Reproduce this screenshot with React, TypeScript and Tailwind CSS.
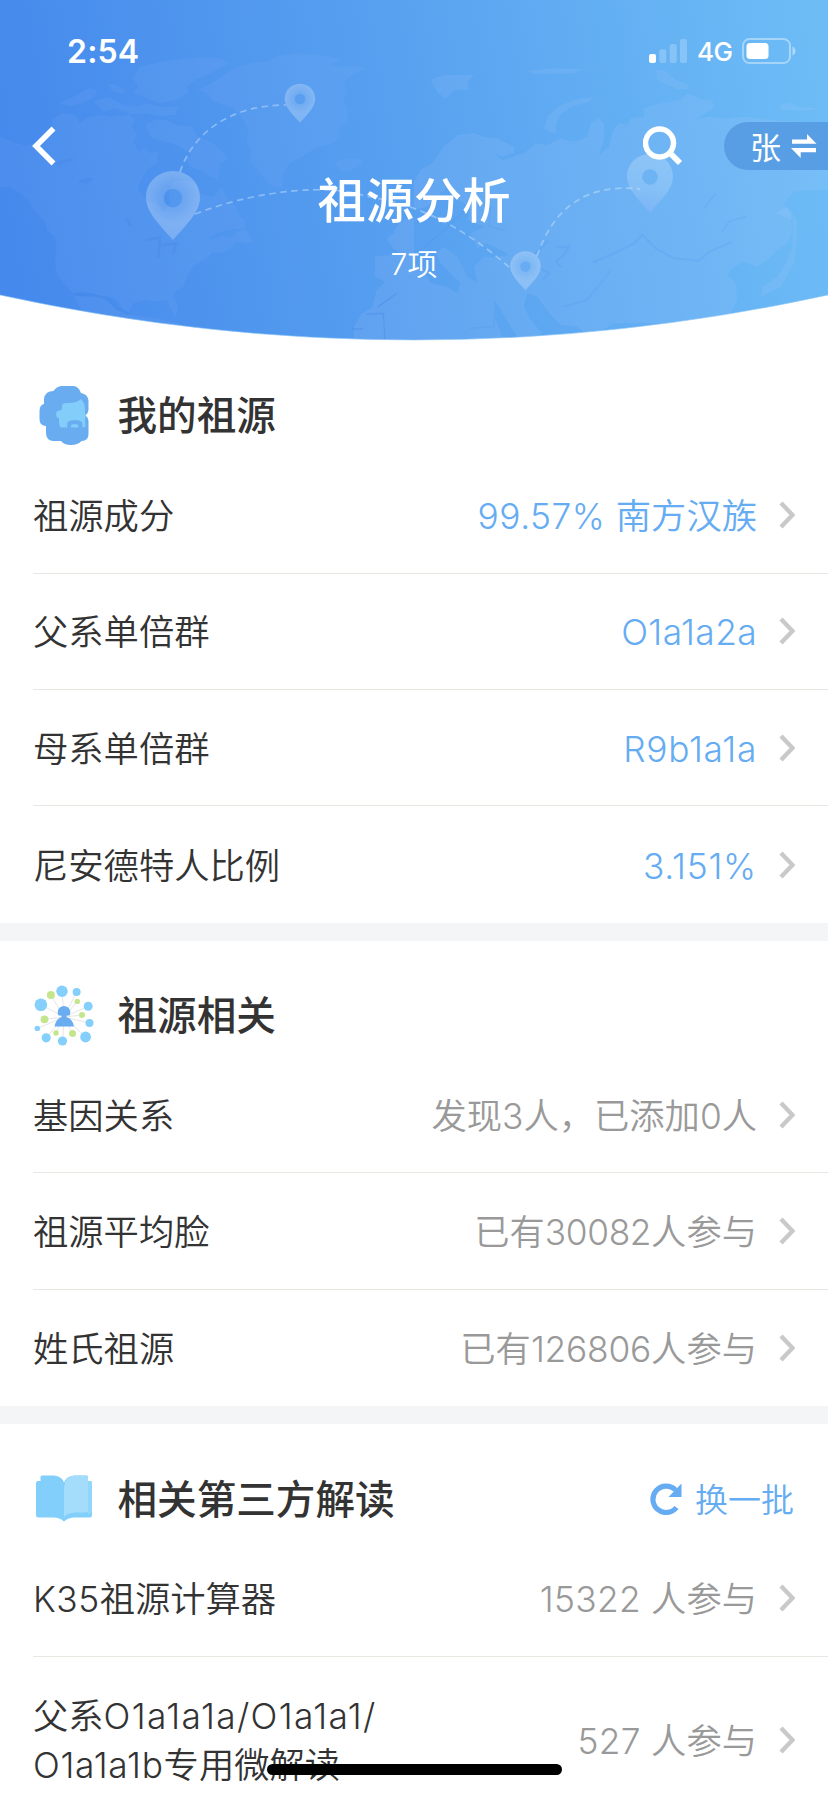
import type { ReactNode } from "react";

type Item = { label: ReactNode; value: ReactNode };

const ancestry: Item[] = [
  { label: "祖源成分", value: <><span className="tracking-[0.500px]">99.57% </span>南方汉族</> },
  { label: "父系单倍群", value: <span className="tracking-[0.400px]">O1a1a2a</span> },
  { label: "母系单倍群", value: <span className="tracking-[0.700px]">R9b1a1a</span> },
  { label: "尼安德特人比例", value: <span className="tracking-[0.800px]">3.151%</span> },
];

const related: Item[] = [
  { label: "基因关系", value: "发现3人，已添加0人" },
  { label: "祖源平均脸", value: <>已有<span className="tracking-[-0.400px]">30082</span>人参与</> },
  { label: "姓氏祖源", value: <>已有<span className="tracking-[-0.200px]">126806</span>人参与</> },
];

const thirdParty: Item[] = [
  { label: <><span className="tracking-[0.500px]">K35</span>祖源计算器</>, value: <><span className="tracking-[0.300px]">15322 </span>人参与</> },
  {
    label: (
      <>
        父系<span className="tracking-[1.350px]">O1a1a1a/O1a1a1/</span>
        <br />
        <span className="tracking-[0.700px]">O1a1a1b</span>专用微解读
      </>
    ),
    value: <><span className="tracking-[0.300px]">527 </span>人参与</>,
  },
];

function Pin({ x, y, r, id }: { x: number; y: number; r: number; id: string }) {
  return (
    <g transform={`translate(${x} ${y}) scale(${r / 27})`}>
      <path
        fillRule="evenodd"
        fill={`url(#${id})`}
        d="M0-27C15-27 27-15.500 27-.5C27 14 14 26 0 42C-14 26-27 14-27-.5C-27-15.500-15-27 0-27ZM0-9.200A9.200 9.200 0 1 0 0 9.200A9.200 9.200 0 1 0 0-9.200Z"
      />
    </g>
  );
}

function WorldMap() {
  return (
    <svg viewBox="0 0 828 341" className="absolute inset-0 h-[341px] w-[828px]" aria-hidden="true">
      <defs>
        <linearGradient id="sky" gradientUnits="userSpaceOnUse" x1="0" y1="180" x2="815" y2="40">
          <stop offset="0" stopColor="#4589ec" />
          <stop offset="0.5" stopColor="#58a1f0" />
          <stop offset="1" stopColor="#6dbcf6" />
        </linearGradient>
        <radialGradient id="pin" gradientUnits="userSpaceOnUse" cx="0" cy="0" r="42">
          <stop offset="0.2" stopColor="#fff" stopOpacity="0.13" />
          <stop offset="0.6" stopColor="#fff" stopOpacity="0.25" />
          <stop offset="1" stopColor="#fff" stopOpacity="0.22" />
        </radialGradient>
        <linearGradient id="pinFade" x1="0" y1="0" x2="0" y2="1">
          <stop offset="0" stopColor="#fff" stopOpacity="0.22" />
          <stop offset="0.6" stopColor="#fff" stopOpacity="0.16" />
          <stop offset="1" stopColor="#c8b8ff" stopOpacity="0.16" />
        </linearGradient>
        <clipPath id="dome">
          <path d="M0 0H828V295Q621 340 414 340Q207 340 0 295Z" />
        </clipPath>
      </defs>
      <g clipPath="url(#dome)">
        <rect width="828" height="341" fill="url(#sky)" />
        <g transform="scale(.33333)" fill="#b4c4ff" fillOpacity="0.075">
          <path d="M0 410L40 425L75 438L120 425L160 400L155 360L185 340L225 345L240 370L265 350L300 345L330 350L390 345L405 360L395 380L410 400L400 425L415 455L435 440L450 460L475 455L470 490L440 510L420 545L415 570L440 600L470 610L490 640L510 610L505 575L520 545L560 540L590 555L600 580L640 590L665 560L680 595L705 615L720 650L735 660L735 685L690 690L650 700L625 720L655 710L670 705L690 715L720 690L740 690L762 725L735 730L710 725L690 745L665 760L640 755L625 770L600 785L580 800L560 830L550 860L520 880L535 930L525 950L510 920L500 900L470 905L440 900L400 910L385 940L370 930L350 900L330 890L290 885L250 875L220 880L190 850L170 820L165 790L170 740L165 710L140 690L135 665L105 635L85 600L60 580L25 560L0 562Z" />
          <path d="M220 885L260 890L310 890L330 910L350 930L385 945L440 950L540 970L560 1000L400 990L250 940L235 915Z" />
          <path d="M175 310L220 290L265 265L290 270L285 290L250 310L210 320Z" />
          <path d="M280 305L320 290L345 300L370 315L410 320L440 310L480 320L535 320L525 345L480 348L440 340L390 342L345 325L310 335Z" />
          <path d="M320 250L350 255L375 270L370 282L335 272Z" />
          <path d="M398 235L420 200L480 185L540 178L600 172L660 175L692 190L660 205L620 225L585 240L560 260L570 275L530 300L480 310L430 290L400 280L415 260Z" />
          <path d="M435 375L465 360L500 360L530 375L575 380L595 410L640 430L685 475L660 490L655 540L630 530L600 510L570 500L560 475L575 465L540 440L500 425L455 415Z" />
          <path d="M595 270L650 240L700 205L760 188L800 185L840 165L900 160L960 165L1020 178L990 195L1030 200L1075 198L1100 207L1060 220L1030 245L1040 270L1030 300L1045 330L1040 365L1015 385L1020 410L1000 430L945 445L905 470L870 490L850 520L845 565L820 560L790 535L770 505L750 490L752 450L740 430L745 390L730 360L700 325L640 305L620 280Z" />
          <path d="M1005 485L1040 475L1080 475L1087 490L1060 508L1030 515L1010 500Z" />
        </g>
        <g transform="scale(.33333)" fill="#d0d4ff" fillOpacity="0.1">
          <path d="M1180 700L1200 665L1230 650L1242 655V760L1210 765L1180 745L1160 715Z" />
          <path d="M1125 768L1242 760V1050H1060L1062 980L1085 940L1115 925L1130 870L1155 845L1125 830Z" />
        </g>
        <g transform="translate(414) scale(.33333)" fill="#d0d4ff" fillOpacity="0.1">
          <path d="M50 240L90 225L180 225L160 245L165 270L120 270L95 297L70 275Z" />
          <path d="M340 212L420 205L505 208L480 220L360 222Z" />
          <path d="M725 210L750 210L785 240L825 255L820 268L790 268L730 240Z" />
          <path d="M390 385L400 350L440 315L500 295L538 293L525 305L470 320L440 345L425 375L428 400L405 395Z" />
          <path d="M1098 315L1130 308L1150 320L1210 325L1180 332L1100 330Z" />
          <path d="M0 545L20 510L55 490L90 440L130 405L180 398L205 410L250 415L300 440L300 460L265 470L240 460L265 480L330 460L365 430L400 435L440 415L480 425L520 410L530 370L555 355L570 370L570 420L555 465L585 440L595 395L615 370L640 375L650 355L690 350L690 325L740 310L800 300L820 280L860 297L895 300L900 325L840 360L880 350L930 355L1000 350L1060 360L1242 370V570L1180 570L1140 575L1110 610L1130 640L1135 690L1120 730L1090 750L1060 780L1030 800L985 785L955 805L940 825L965 850L970 900L950 940L920 970H600L530 1010L490 980L440 975L405 940L370 890L340 880L330 920L350 960L385 1000L350 1015L310 1010L290 980L260 930L240 900L245 960L265 1010L250 1030H0V790L30 810L50 850L100 860L130 880L140 850L80 790L65 760L90 740L130 770L160 830L190 850L180 800L210 770L250 770L285 765L250 745L215 730L190 745L170 700L210 680L160 660L170 620L130 600L100 560L70 590L40 620L0 630Z" />
          <path d="M1085 640L1120 620L1150 660L1150 720L1140 790L1100 860L1040 890L1045 860L1090 830L1120 780L1135 740L1135 660Z" />
        </g>
        <g transform="translate(414) scale(.33333)" fill="none" stroke="#3e91ec" strokeOpacity="0.16" strokeWidth="6" strokeLinecap="round">
          <path d="M430 742L465 740L450 765L425 785L440 800M365 760L400 725M380 805L405 820L390 835" />
          <path d="M540 785L590 765L660 730L685 705L725 745L780 775L855 782L885 755L950 728" />
          <path d="M925 695L945 665L995 650M870 625L905 580M165 985L240 980L240 930M170 600L165 620L80 700L30 740M230 620L225 680L270 690M450 920L520 900L560 850L590 810" strokeWidth="4" />
        </g>
        <g transform="scale(.33333)" fill="none" stroke="#3e7de4" strokeOpacity="0.2" strokeWidth="8" strokeLinecap="round">
          <path d="M240 545L275 535L255 550M175 490L215 478M380 655L390 675M440 720L480 712L475 770M490 735L530 730L520 760" />
          <path d="M225 885L280 883L325 900L350 925L385 940" strokeWidth="6" />
          <path d="M1060 987H1088M1100 942L1150 940L1155 1020M1135 920L1190 880" strokeOpacity=".3" strokeWidth="4" />
        </g>
        <g fill="none" stroke="#d8edff" strokeOpacity="0.42" strokeWidth="1.700" strokeDasharray="6.500 4.500">
          <path d="M180 172C193 133 230 105 286 105" />
          <path d="M195 214C260 189 330 184 365 196C425 205 470 233 509 267" />
          <path d="M537 256C553 209 585 183 640 189" />
        </g>
        <Pin x={173} y={198} r={27} id="pin" />
        <Pin x={300} y={99} r={15.300} id="pin" />
        <Pin x={525.500} y={266.500} r={15.300} id="pin" />
        <Pin x={650} y={177} r={23} id="pinFade" />
      </g>
      <path d="M0 295Q207 340 414 340Q621 340 828 295" fill="none" stroke="#8cc5f7" strokeOpacity=".6" strokeWidth="1" />
    </svg>
  );
}

function StatusBar() {
  return (
    <div className="flex h-[102px] items-center justify-between pr-[32px] pl-[67px]">
      <span className="pt-[1px] text-[32px] leading-none font-semibold tracking-[0.200px]">2:54</span>
      <div className="flex items-center">
        <svg width="38" height="24" viewBox="0 0 38 24" fill="#fff" aria-hidden="true">
          <rect x="0" y="15" width="7" height="9" rx="2" />
          <g fillOpacity=".22">
            <rect x="10.300" y="10.300" width="7" height="13.700" rx="2" />
            <rect x="20.700" y="5" width="7" height="19" rx="2" />
            <rect x="31" y="0" width="7" height="24" rx="2" />
          </g>
        </svg>
        <span className="ml-[10px] w-[36px] pt-[2px] text-[26px] leading-none font-medium tracking-[-0.500px]">4G</span>
        <svg className="ml-[9px]" width="54" height="26" viewBox="0 0 54 26" aria-hidden="true">
          <rect x="1" y="1" width="47" height="24" rx="6.500" fill="none" stroke="#fff" strokeOpacity=".4" strokeWidth="2" />
          <rect x="4.500" y="5" width="22" height="16" rx="3.500" fill="#fff" />
          <path d="M50.500 8.500C54.500 10.300 54.500 15.700 50.500 17.500Z" fill="#fff" fillOpacity=".45" />
        </svg>
      </div>
    </div>
  );
}

function Header() {
  return (
    <header className="relative h-[341px] shrink-0 text-white">
      <WorldMap />
      <div className="relative">
        <StatusBar />
        <div className="flex h-[88px] items-start pt-[20px] pl-[32px]">
          <svg className="mt-[4px]" width="24" height="40" viewBox="0 0 24 40" fill="none" stroke="#fff" strokeWidth="5.500" aria-hidden="true">
            <path d="M21.500 2.500L4 20L21.500 37.500" />
          </svg>
          <svg className="mt-[4px] ml-[587px]" width="40" height="40" viewBox="0 0 40 40" fill="none" stroke="#fff" aria-hidden="true">
            <circle cx="16.500" cy="17" r="14" strokeWidth="5.500" />
            <path d="M27 27L37 37" strokeWidth="5.800" />
          </svg>
          <div className="ml-[41px] flex h-[48px] w-[104px] items-center rounded-l-full bg-[#589ee4] pl-[26px]">
            <span className="pt-[2px] text-[31px] leading-none">张</span>
            <svg className="ml-[10px]" width="26" height="24" viewBox="0 0 26 24" fill="#fff" aria-hidden="true">
              <path d="M1 5.500H16V0L25.500 9.800H1ZM25 14H0L9.700 24V18.300H25Z" />
            </svg>
          </div>
        </div>
      </div>
      <div className="relative -mt-[19px] flex flex-col items-center">
        <h1 className="text-[48.300px] leading-[60px] font-medium">祖源分析</h1>
        <p className="mt-[19px] text-[30px] leading-[28px] font-[350]">7项</p>
      </div>
    </header>
  );
}

function BeardIcon() {
  return (
    <svg className="-ml-[2px]" width="64" height="64" viewBox="0 0 64 64" aria-hidden="true">
      <path
        fill="#69acf0"
        d="M30 2H43Q48 3 50 9Q57 10 57.500 17V26Q57 30 54.500 31.600Q57.500 34 57.500 37V50Q57.500 57 50.500 57Q47 61 40 61Q33 61 30 57H22Q15 56 15 49V42Q8.500 42 8.500 35V27Q8.500 21 13 20V15Q14 7 22.500 7Q25 3 30 2Z"
      />
      <path
        fill="#82cdfa"
        d="M31.500 20Q33 19 37 19Q46 19 49.700 15Q54 19 54 25Q53.500 29 55 31.600Q53.500 34 54.500 42.600L51.500 43.500V40Q50.500 36.300 46 36.300H42Q36.500 36.300 36.300 40V43.500H30Q27.500 42 28 34.500Q25 33.500 25 30Q25 26.500 30.500 26Z"
      />
      <path fill="#82cdfa" d="M40 43.500V42Q40 40.200 42 40.200H45.500Q47.300 40.200 47.300 42V43.500Z" />
    </svg>
  );
}

const blueDots = [
  [29.000, 10.300, 5.700], [43.600, 10.900, 4], [55.200, 25.300, 4.500], [56.500, 42, 4],
  [52.600, 56, 5.400], [29.500, 60, 4.600], [13.200, 56.800, 4.600], [4.300, 47.400, 2.700], [7.900, 23.800, 6.300],
];
const greenDots = [
  [17.900, 14, 4], [44.300, 20.400, 2.700], [49, 34, 3], [39.500, 52.600, 3.500], [23, 52, 2.700], [11.500, 38.300, 3.900],
];

function NetworkIcon() {
  return (
    <svg width="64" height="70" viewBox="0 0 64 70" aria-hidden="true">
      <g stroke="#e6e6e8" strokeWidth="1">
        {[...blueDots, ...greenDots].map(([x, y], i) => (
          <line key={i} x1="31" y1="36" x2={x} y2={y} />
        ))}
      </g>
      {blueDots.map(([x, y, r], i) => <circle key={i} cx={x} cy={y} r={r} fill="#84cffb" />)}
      {greenDots.map(([x, y, r], i) => <circle key={i} cx={x} cy={y} r={r} fill="#c3e68c" />)}
      <path
        fill="#69acf0"
        d="M25.500 34.500Q24.700 33 24.700 31.300A6.300 6.300 0 0 1 37.300 31.300Q37.300 33 36.500 34.500H33.500V36.300Q39.500 37.500 41 45.600H21.500Q23 37.500 28.500 36.300V34.500Z"
      />
    </svg>
  );
}

function BookIcon() {
  return (
    <svg width="64" height="50" viewBox="0 0 64 50" aria-hidden="true">
      <path fill="#82cffb" d="M5 7H7.500V3Q7.500 1.500 9 1.500H21Q28.500 2 31 8.500Q33.500 2 41 1.500H53.500Q55 1.500 55 3V7H57Q59 7 59 9V41Q59 43.500 57 43.500H42Q35 43.500 31 47.500Q27 43.500 20 43.500H5Q3 43.500 3 41V9Q3 7 5 7Z" />
      <path fill="#a4ddfc" d="M31 43V13Q32 2 42 1.500H53.500Q55 1.500 55 3V36.500Q55 38.500 53 38.500H42Q34 39 31 43Z" />
      <path fill="#93d6fc" d="M55 7H57Q59 7 59 9V38L55 41Z" />
    </svg>
  );
}

function SectionTitle({ icon, title, action }: { icon: ReactNode; title: string; action?: ReactNode }) {
  return (
    <div className="flex h-[116.500px] items-center pt-[34px] pr-[34px] pl-[33px]">
      <div className="flex w-[84.500px] shrink-0 items-center">{icon}</div>
      <h2 className="pt-[2px] text-[39.600px] leading-none font-medium">{title}</h2>
      {action && <div className="ml-auto">{action}</div>}
    </div>
  );
}

function Row({ item, tone, tall = false }: { item: Item; tone: string; tall?: boolean }) {
  return (
    <div className={`ml-[33px] flex items-center border-b border-[#e8e8e3] pr-[33.500px] last:border-b-0 ${tall ? "h-[166px]" : "h-[116.300px]"}`}>
      <div className="pt-[3px] text-[35.300px] leading-[49px] font-[350] whitespace-nowrap">{item.label}</div>
      <div className={`ml-auto pt-[3px] text-[35.300px] leading-[49px] font-[350] whitespace-pre ${tone}`}>{item.value}</div>
      <svg className="ml-[21.500px] shrink-0" width="16" height="28" viewBox="0 0 16 28" fill="none" stroke="#c9c9c9" strokeWidth="4.400" aria-hidden="true">
        <path d="M2 2L13.500 14L2 26" />
      </svg>
    </div>
  );
}

export default function App() {
  return (
    <div className="relative flex h-[1793px] w-[828px] flex-col overflow-hidden bg-white font-['Inter','Noto_Sans_CJK_SC',sans-serif] text-[#333]">
      <Header />
      <section>
        <SectionTitle icon={<BeardIcon />} title="我的祖源" />
        <div>{ancestry.map((item, i) => <Row key={i} item={item} tone="text-[#65acf2]" />)}</div>
      </section>
      <div className="h-[18px] shrink-0 bg-[#f3f5f7]" />
      <section>
        <SectionTitle icon={<NetworkIcon />} title="祖源相关" />
        <div>{related.map((item, i) => <Row key={i} item={item} tone="text-[#999]" />)}</div>
      </section>
      <div className="h-[18px] shrink-0 bg-[#f3f5f7]" />
      <section>
        <SectionTitle
          icon={<BookIcon />}
          title="相关第三方解读"
          action={
            <button className="flex items-center text-[33px] leading-none font-[350] text-[#65acf2]">
              <svg className="mr-[13px]" width="33" height="32" viewBox="0 0 33 32" aria-hidden="true">
                <path d="M27.500 24.500A13.200 13.200 0 1 1 26.500 7" fill="none" stroke="#65acf2" strokeWidth="5.200" />
                <path d="M32.500 .5V14H19.500Z" fill="#65acf2" />
              </svg>
              <span className="pt-[3px]">换一批</span>
            </button>
          }
        />
        <div>
          {thirdParty.map((item, i) => <Row key={i} item={item} tone="text-[#999]" tall={i === 1} />)}
        </div>
      </section>
      <div className="absolute top-[1764px] left-[267px] h-[11px] w-[295px] rounded-full bg-black" />
    </div>
  );
}
